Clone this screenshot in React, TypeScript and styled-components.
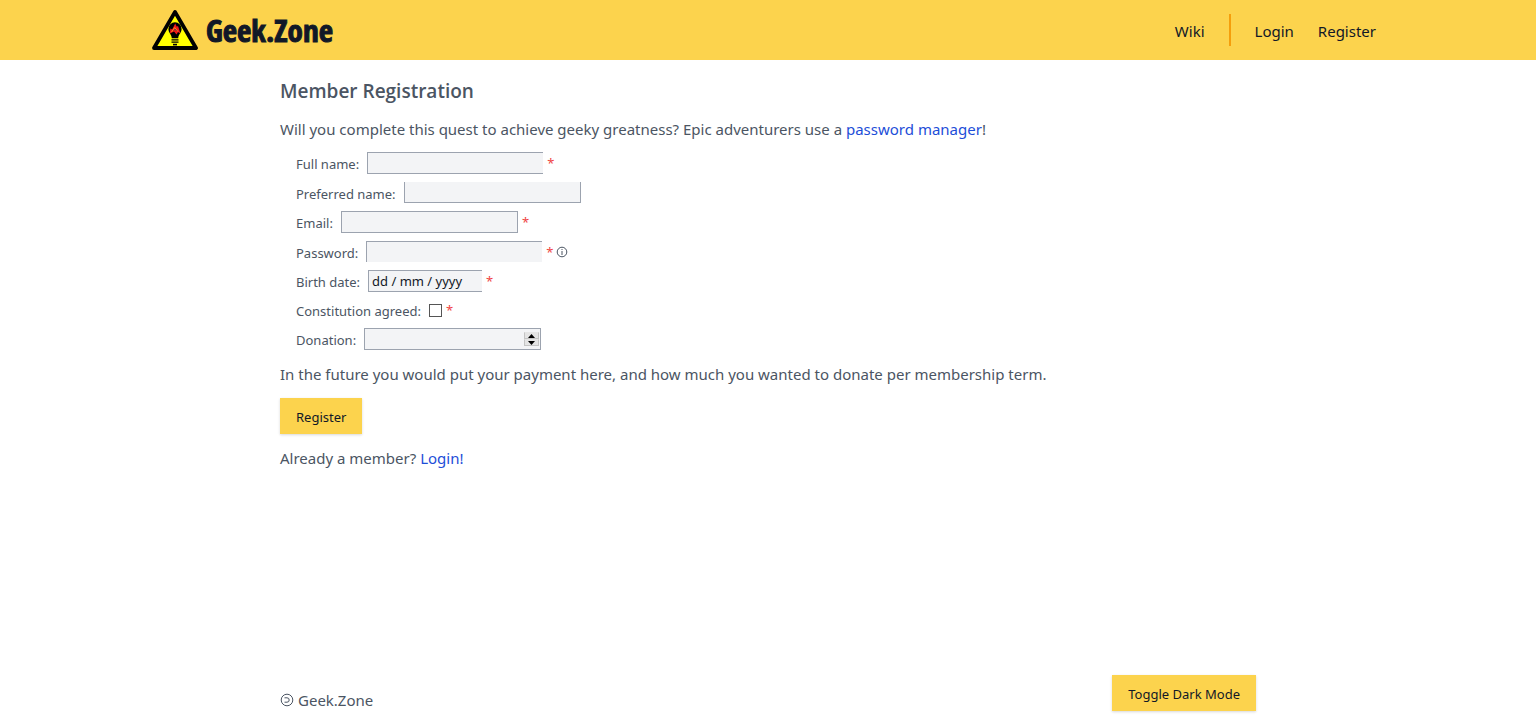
import React from "react";
import styled, { createGlobalStyle, css } from "styled-components";

const GlobalStyle = createGlobalStyle`
  *, *::before, *::after { box-sizing: border-box; }
  body {
    margin: 0;
    background: #fff;
    color: #4b5563;
    font-family: "Noto Sans", "Open Sans", sans-serif;
    font-size: 15px;
    line-height: 24px;
  }
  h1, p { margin: 0; }
`;

const Page = styled.div`
  display: flex;
  flex-direction: column;
  min-height: 100vh;
`;

const Header = styled.header`
  background: #fcd34d;
`;

const HeaderInner = styled.div`
  display: flex;
  align-items: center;
  justify-content: space-between;
  max-width: 1280px;
  min-height: 60px;
  margin: 0 auto;
  padding: 0 32px 0 24px;
`;

const Brand = styled.a`
  display: flex;
  align-items: center;
  gap: 8px;
  color: #111827;
  text-decoration: none;
`;

const BrandName = styled.span`
  font-family: "Open Sans Condensed", "Roboto Condensed", sans-serif;
  font-size: 31px;
  font-weight: 700;
  line-height: 40px;
  -webkit-text-stroke: 1px #111827;
`;

const Nav = styled.nav`
  display: flex;
  align-items: center;
  gap: 24px;
`;

const NavLink = styled.a`
  padding-top: 2px;
  color: #111827;
  text-decoration: none;
`;

const NavDivider = styled.span`
  width: 2px;
  height: 32px;
  background: #f59e0b;
`;

const column = css`
  width: 100%;
  max-width: 1024px;
  margin: 0 auto;
  padding: 0 24px;
`;

const Main = styled.main`
  ${column}
  flex: 1;
  padding-top: 17px;
`;

const Title = styled.h1`
  font-family: "Open Sans", "Noto Sans", sans-serif;
  font-size: 19px;
  font-weight: 600;
  line-height: 28px;
  margin-bottom: 12px;
`;

const Text = styled.p`
  line-height: 24px;
`;

const TextLink = styled.a`
  color: #1d4ed8;
  text-decoration: none;
`;

const Fields = styled.div`
  display: flex;
  flex-direction: column;
  gap: 8px;
  padding: 11px 16px 12px;
`;

const Row = styled.div`
  display: flex;
  align-items: center;
  font-size: 13px;
  line-height: 20px;
`;

const Label = styled.label`
  height: 20px;
  margin-right: 8px;
  line-height: 22px;
`;

type Side = "top" | "right" | "bottom" | "left";

const frame = css<{ $open?: Side[] }>`
  box-sizing: content-box;
  height: 20px;
  border: 1px solid #9ca3af;
  ${({ $open = [] }) => $open.map((side) => `border-${side}: 0;`).join(" ")}
  border-radius: 0;
  background: #f3f4f6;
`;

const Field = styled.input<{ $open?: Side[]; $short?: boolean }>`
  ${frame}
  width: ${({ $short }) => ($short ? 110 : 172)}px;
  padding: 0 0 0 3px;
  color: #111827;
  font: inherit;
  outline: none;
  &::placeholder { color: #111827; opacity: 1; }
`;

const NumberBox = styled.div`
  ${frame}
  display: flex;
  align-items: center;
  width: 175px;
`;

const NumberInput = styled.input`
  flex: 1;
  min-width: 0;
  height: 20px;
  padding: 0 4px;
  border: 0;
  background: transparent;
  font: inherit;
  outline: none;
  appearance: textfield;
  &::-webkit-inner-spin-button { appearance: none; }
`;

const Spinner = styled.div`
  display: flex;
  flex-direction: column;
  width: 15px;
  margin-right: 1px;
`;

const Step = styled.button`
  display: flex;
  align-items: center;
  justify-content: center;
  height: 7px;
  padding: 0;
  border: 1px solid #c4c4c4;
  border-top-color: #e5e5e5;
  background: #e4e4e4;
`;

const Checkbox = styled.input`
  appearance: none;
  width: 13px;
  height: 13px;
  margin: 0;
  border: 1px solid #555;
  background: #fff;
  &:checked { background: #4b5563; }
`;

const Required = styled.span`
  margin-left: 4px;
  color: #ef4444;
`;

const InfoIcon = styled.svg`
  margin-left: 3px;
`;

const Button = styled.button`
  height: 36px;
  padding: 2px 16px 0;
  border: 0;
  background: #fcd34d;
  color: #111827;
  font: inherit;
  font-size: 13px;
  line-height: 20px;
  box-shadow: 0 1px 3px rgba(0, 0, 0, 0.1), 0 1px 2px rgba(0, 0, 0, 0.06);
  cursor: pointer;
`;

const Actions = styled.div`
  padding: 12px 0;
`;

const Footer = styled.footer`
  ${column}
  display: flex;
  align-items: flex-start;
  justify-content: space-between;
  padding-bottom: 10px;
`;

const Copyleft = styled.p`
  display: flex;
  align-items: center;
  gap: 4px;
  padding-top: 13px;
`;

const Logo = () => (
  <svg width="46" height="40" viewBox="0 0 46 40" aria-hidden="true">
    <path d="M23 2 L44 38 H2 Z" fill="#ff0" stroke="#000" strokeWidth="3.800" strokeLinejoin="round" />
    <path d="M23 12.300 a6.600 6.600 0 0 1 6.600 6.600 c0 3.600 -3.100 5.200 -3.400 9.300 h-6.400 c-.3 -4.100 -3.400 -5.700 -3.400 -9.300 A6.600 6.600 0 0 1 23 12.300Z" fill="#000" />
    <path d="M19.500 29.900h7M19.500 32.200h7" stroke="#000" strokeWidth="1.200" />
    <path d="M21 34.600h4" stroke="#000" strokeWidth="1.600" />
    <path d="M18 23.500 L18.300 18.500 L20.200 19.500 L23.200 13.500 L24.800 16.800 L26 16 L28.400 23.500 L26 22 L24.500 24.500 L22 21.500 Z" fill="#f01818" />
    <path d="M19.500 22 L22.600 17.500 L25.800 21.500" fill="none" stroke="#ff8c1a" />
    <path d="M22 20.500 L23.200 19.200 L24.400 20.800" fill="none" stroke="#444" />
  </svg>
);

const Info = () => (
  <InfoIcon width="12" height="12" viewBox="0 0 12 12" role="img" aria-label="Password information">
    <circle cx="6" cy="6" r="4.800" fill="none" stroke="#4b5563" />
    <path d="M6 5v4M6 3v1" stroke="#4b5563" />
  </InfoIcon>
);

const CopyleftIcon = () => (
  <svg width="14" height="14" viewBox="0 0 14 14" role="img" aria-label="Copyleft">
    <circle cx="7" cy="7" r="5.800" fill="none" stroke="#4b5563" />
    <path d="M4.500 4.800h2.500a2.200 2.200 0 0 1 0 4.400h-2.500" fill="none" stroke="#4b5563" />
  </svg>
);

const Star = () => <Required aria-hidden="true">*</Required>;

export default function App() {
  return (
    <Page>
      <GlobalStyle />
      <Header>
        <HeaderInner>
          <Brand href="#home">
            <Logo />
            <BrandName>Geek.Zone</BrandName>
          </Brand>
          <Nav>
            <NavLink href="#wiki">Wiki</NavLink>
            <NavDivider />
            <NavLink href="#login">Login</NavLink>
            <NavLink href="#register">Register</NavLink>
          </Nav>
        </HeaderInner>
      </Header>
      <Main>
        <Title>Member Registration</Title>
        <Text>
          Will you complete this quest to achieve geeky greatness? Epic adventurers use a{" "}
          <TextLink href="#password-manager">password manager</TextLink>!
        </Text>
        <form onSubmit={(event) => event.preventDefault()}>
          <Fields>
            <Row>
              <Label htmlFor="full-name">Full name:</Label>
              <Field id="full-name" type="text" required $open={["right"]} />
              <Star />
            </Row>
            <Row>
              <Label htmlFor="preferred-name">Preferred name:</Label>
              <Field id="preferred-name" type="text" $open={["top"]} />
            </Row>
            <Row>
              <Label htmlFor="email">Email:</Label>
              <Field id="email" type="email" required />
              <Star />
            </Row>
            <Row>
              <Label htmlFor="password">Password:</Label>
              <Field id="password" type="password" required $open={["right", "bottom"]} />
              <Star />
              <Info />
            </Row>
            <Row>
              <Label htmlFor="birth-date">Birth date:</Label>
              <Field id="birth-date" type="text" placeholder="dd / mm / yyyy" required $open={["right"]} $short />
              <Star />
            </Row>
            <Row>
              <Label htmlFor="constitution">Constitution agreed:</Label>
              <Checkbox id="constitution" type="checkbox" required />
              <Star />
            </Row>
            <Row>
              <Label htmlFor="donation">Donation:</Label>
              <NumberBox>
                <NumberInput id="donation" type="number" />
                <Spinner>
                  <Step type="button" aria-label="Increase donation">
                    <svg width="7" height="4" viewBox="0 0 7 4"><path d="M0 4L3.500 0L7 4Z" /></svg>
                  </Step>
                  <Step type="button" aria-label="Decrease donation">
                    <svg width="7" height="4" viewBox="0 0 7 4"><path d="M0 0L3.500 4L7 0Z" /></svg>
                  </Step>
                </Spinner>
              </NumberBox>
            </Row>
          </Fields>
          <Text>In the future you would put your payment here, and how much you wanted to donate per membership term.</Text>
          <Actions>
            <Button type="submit">Register</Button>
          </Actions>
        </form>
        <Text>
          Already a member? <TextLink href="#login">Login!</TextLink>
        </Text>
      </Main>
      <Footer>
        <Copyleft>
          <CopyleftIcon />
          Geek.Zone
        </Copyleft>
        <Button type="button">Toggle Dark Mode</Button>
      </Footer>
    </Page>
  );
}
